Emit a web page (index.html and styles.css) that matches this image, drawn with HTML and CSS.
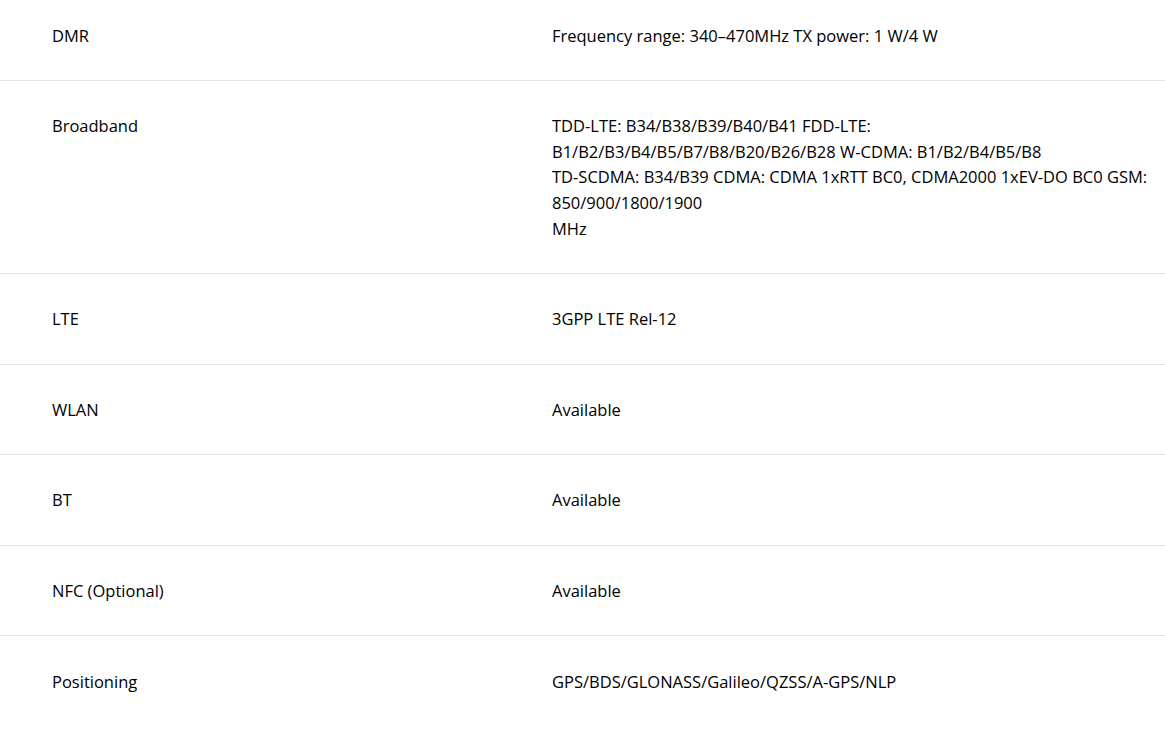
FILE: index.html
```html
<!DOCTYPE html>
<html lang="en">
<head>
<meta charset="utf-8">
<title>Specs</title>
<link rel="stylesheet" href="styles.css">
</head>
<body>
<div class="specs">
  <div class="row first">
    <div class="label">DMR</div>
    <div class="value">Frequency range: 340–470MHz TX power: 1 W/4 W</div>
  </div>
  <div class="row">
    <div class="label">Broadband</div>
    <div class="value">TDD-LTE: B34/B38/B39/B40/B41 FDD-LTE:<br>B1/B2/B3/B4/B5/B7/B8/B20/B26/B28 W-CDMA: B1/B2/B4/B5/B8<br>TD-SCDMA: B34/B39 CDMA: CDMA 1xRTT BC0, CDMA2000 1xEV-DO BC0 GSM:<br>850/900/1800/1900<br>MHz</div>
  </div>
  <div class="row">
    <div class="label">LTE</div>
    <div class="value">3GPP LTE Rel-12</div>
  </div>
  <div class="row">
    <div class="label">WLAN</div>
    <div class="value">Available</div>
  </div>
  <div class="row">
    <div class="label">BT</div>
    <div class="value">Available</div>
  </div>
  <div class="row">
    <div class="label">NFC (Optional)</div>
    <div class="value">Available</div>
  </div>
  <div class="row">
    <div class="label">Positioning</div>
    <div class="value">GPS/BDS/GLONASS/Galileo/QZSS/A-GPS/NLP</div>
  </div>
</div>
</body>
</html>
```

FILE: styles.css
```css
html, body {
  margin: 0;
  padding: 0;
  background: #ffffff;
}
body {
  font-family: "Open Sans", "Noto Sans", sans-serif;
  font-size: 16.5px;
  line-height: 25.6px;
  color: #000000;
}
.specs {
  display: flex;
  flex-direction: column;
}
.row {
  display: grid;
  grid-template-columns: 500px 1fr;
  padding: 32.3px 10px 31.7px 52px;
  border-bottom: 1px solid #e5e5e5;
}
.row.first {
  padding-top: 22.7px;
}
.row:last-child {
  border-bottom: none;
}
```
